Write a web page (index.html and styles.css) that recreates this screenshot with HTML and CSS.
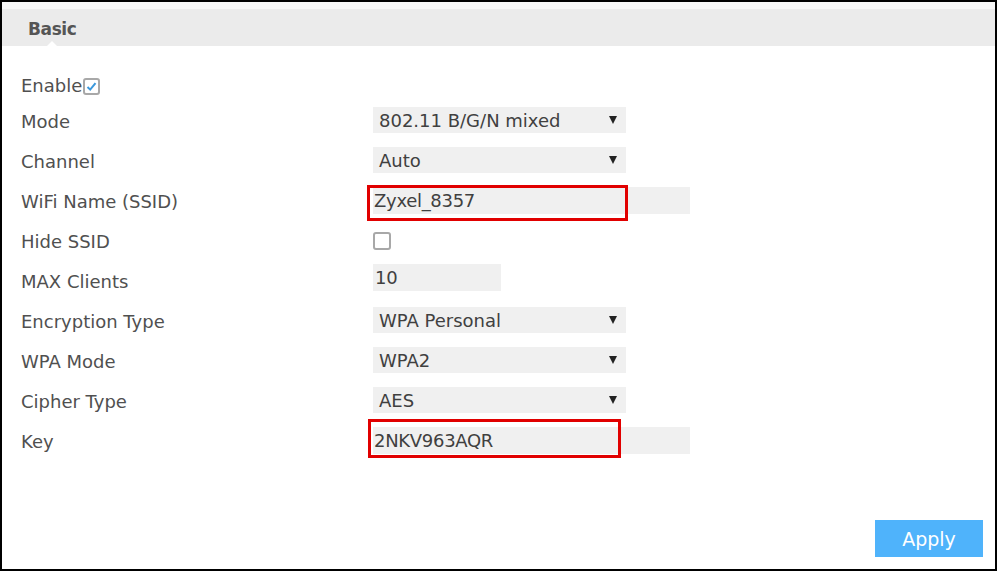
FILE: index.html
```html
<!DOCTYPE html>
<html lang="en">
<head>
    <meta charset="UTF-8">
    <meta name="viewport" content="width=device-width, initial-scale=1.0">
    <title>Wireless - Basic</title>
    <link rel="stylesheet" href="styles.css">
</head>
<body>
    <div class="panel">
        <div class="tabbar">
            <span class="tab">Basic</span>
        </div>
        <div class="form">
            <div class="row row-first">
                <label class="enable">Enable<span class="check on">
                    <svg width="13" height="13" viewBox="0 0 13 13"><path d="M2.5 7 L5.2 9.6 L10.5 3.2" fill="none" stroke="#3a98dc" stroke-width="2"/></svg>
                </span></label>
            </div>
            <div class="row">
                <div class="label">Mode</div>
                <div class="select"><span>802.11 B/G/N mixed</span><span class="arrow"></span></div>
            </div>
            <div class="row">
                <div class="label">Channel</div>
                <div class="select"><span>Auto</span><span class="arrow"></span></div>
            </div>
            <div class="row">
                <div class="label">WiFi Name (SSID)</div>
                <div class="field">
                    <div class="input wide">Zyxel_8357</div>
                    <div class="mark mark-ssid"></div>
                </div>
            </div>
            <div class="row">
                <div class="label">Hide SSID</div>
                <span class="check"></span>
            </div>
            <div class="row">
                <div class="label">MAX Clients</div>
                <div class="input short">10</div>
            </div>
            <div class="row">
                <div class="label">Encryption Type</div>
                <div class="select"><span>WPA Personal</span><span class="arrow"></span></div>
            </div>
            <div class="row">
                <div class="label">WPA Mode</div>
                <div class="select"><span>WPA2</span><span class="arrow"></span></div>
            </div>
            <div class="row">
                <div class="label">Cipher Type</div>
                <div class="select"><span>AES</span><span class="arrow"></span></div>
            </div>
            <div class="row">
                <div class="label">Key</div>
                <div class="field">
                    <div class="input wide">2NKV963AQR</div>
                    <div class="mark mark-key"></div>
                </div>
            </div>
        </div>
        <div class="actions">
            <button class="apply">Apply</button>
        </div>
    </div>
</body>
</html>
```

FILE: styles.css
```css
* {
    box-sizing: border-box;
}
body {
    margin: 0;
    font-family: 'DejaVu Sans', sans-serif;
    background: white;
}
.panel {
    width: 997px;
    height: 571px;
    border: 2px solid #000;
    display: flex;
    flex-direction: column;
}
.tabbar {
    position: relative;
    height: 44px;
    border-top: 7px solid #f7f7f7;
    background: #ebebeb;
    padding-left: 26px;
    display: flex;
    align-items: center;
}
.tabbar::after {
    content: "";
    position: absolute;
    left: 45px;
    bottom: 0;
    border-left: 5px solid transparent;
    border-right: 5px solid transparent;
    border-bottom: 5px solid white;
}
.tab {
    font-size: 17px;
    font-weight: bold;
    color: #555;
    letter-spacing: -0.4px;
    padding-top: 2px;
}
.form {
    padding: 22px 0 0 19px;
}
.row {
    display: grid;
    grid-template-columns: 352px auto;
    align-items: center;
    height: 40px;
}
.row-first {
    display: flex;
    height: 32px;
}
.label, .enable {
    font-size: 18px;
    color: #505050;
    padding-top: 2px;
}
.enable {
    display: flex;
    align-items: center;
}
.check {
    width: 18px;
    height: 18px;
    border: 2px solid #a8a8a8;
    border-radius: 3px;
    display: inline-flex;
    align-items: center;
    justify-content: center;
    margin-top: 2px;
}
.check.on {
    width: 17px;
    height: 17px;
    margin-left: 1px;
    margin-top: 2px;
}
.select {
    width: 253px;
    height: 26px;
    background: #f0f0f0;
    display: flex;
    align-items: center;
    justify-content: space-between;
    padding: 1px 9px 0 6px;
    font-size: 18px;
    color: #404040;
}
.arrow {
    border-left: 4px solid transparent;
    border-right: 4px solid transparent;
    border-top: 8px solid #222;
    margin-top: -1px;
}
.field {
    position: relative;
}
.input {
    height: 27px;
    background: #f0f0f0;
    font-size: 18px;
    color: #404040;
    padding: 1px 0 0 1px;
    display: flex;
    align-items: center;
    letter-spacing: -0.3px;
}
.input.wide {
    width: 317px;
}
.input.short {
    width: 128px;
    padding-left: 2px;
    margin-top: -6px;
}
.mark {
    position: absolute;
    border: 3px solid #e10000;
}
.mark-ssid {
    left: -6px;
    top: -2px;
    width: 261px;
    height: 36px;
}
.mark-key {
    left: -5px;
    top: -8px;
    width: 253px;
    height: 39px;
}
.actions {
    margin-top: auto;
    display: flex;
    justify-content: flex-end;
    padding: 0 12px 12px 0;
}
.apply {
    width: 108px;
    height: 37px;
    background: #4fb3fb;
    color: white;
    border: none;
    font-family: 'DejaVu Sans', sans-serif;
    font-size: 19px;
    cursor: pointer;
}
```
